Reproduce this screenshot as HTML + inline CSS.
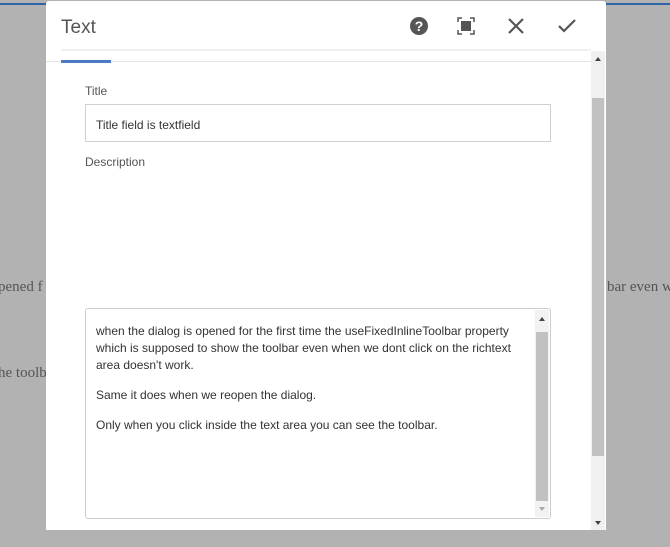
<!DOCTYPE html>
<html><head><meta charset="utf-8"><style>
*{margin:0;padding:0;box-sizing:border-box}
body{width:670px;height:547px;background:#b2b2b2;position:relative;overflow:hidden;font-family:"Liberation Sans",sans-serif}
.bg{position:absolute;font-family:"Liberation Serif",serif;font-size:15px;color:#555;white-space:nowrap}
.topline{position:absolute;left:0;top:3px;width:670px;height:2px;background:#2e64a8}
.dlg{position:absolute;left:46px;top:1px;width:560px;height:529px;background:#fff;border-radius:3px 3px 0 0}
.ttl{position:absolute;left:15px;top:16px;font-size:19px;color:#555;font-weight:300}
.strip{position:absolute;left:15px;top:48px;width:530px;height:2px;background:#f0f0f0}
.tabline{position:absolute;left:0;top:60px;width:545px;height:1px;background:#e5e5e5}
.tabsel{position:absolute;left:15px;top:59px;width:50px;height:3px;background:#4a7bc4}
.sb{position:absolute;left:545px;top:50px;width:14px;height:479px;background:#f0f0f0}
.sb .th{position:absolute;left:1px;top:47px;width:12px;height:358px;background:#c1c1c1}
.lbl{position:absolute;left:39px;font-size:12px;color:#555}
.inp{position:absolute;left:39px;top:103px;width:466px;height:38px;border:1px solid #d0d0d0;font-size:12px;color:#333;padding:13px 0 0 10px}
.ta{position:absolute;left:39px;top:307px;width:466px;height:211px;border:1px solid #ccc;border-radius:3px;font-size:12px;color:#333;padding:14px 0 0 10px;line-height:17px}
.ta p{margin-bottom:13px;width:420px}
.isb{position:absolute;right:1px;top:1px;width:14px;height:207px;background:#f2f2f2}
.isb .th{position:absolute;left:1px;top:22px;width:12px;height:169px;background:#c1c1c1}
.arr{position:absolute;width:0;height:0;border-left:3px solid transparent;border-right:3px solid transparent}
</style></head><body>
<div class="topline"></div>
<div class="bg" style="left:-2px;top:279px">pened f</div>
<div class="bg" style="left:607px;top:279px">bar even w</div>
<div class="bg" style="left:-2px;top:365px">he toolb</div>
<div class="dlg">
<div class="ttl">Text</div>
<svg style="position:absolute;left:363px;top:15px" width="20" height="20" viewBox="0 0 20 20"><circle cx="10" cy="10" r="9" fill="#555"/><text x="10" y="15" text-anchor="middle" font-size="14" font-weight="bold" fill="#fff" font-family="Liberation Sans">?</text></svg>
<svg style="position:absolute;left:411px;top:16px" width="18" height="18" viewBox="0 0 18 18" fill="none" stroke="#555" stroke-width="1.5"><path d="M1 5V1h4M13 1h4v4M17 13v4h-4M5 17H1v-4"/><rect x="4" y="4" width="10" height="10" fill="#555" stroke="none"/></svg>
<svg style="position:absolute;left:461px;top:16px" width="18" height="18" viewBox="0 0 18 18" stroke="#555" stroke-width="2.2"><path d="M2 2L16 16M16 2L2 16"/></svg>
<svg style="position:absolute;left:512px;top:18px" width="18" height="14" viewBox="0 0 18 14" fill="none" stroke="#555" stroke-width="2.2"><path d="M1 7l5 5L17 1"/></svg>
<div class="strip"></div>
<div class="tabline"></div>
<div class="tabsel"></div>
<div class="sb"><div class="arr" style="left:4px;top:6px;border-bottom:4px solid #444"></div><div class="th"></div><div class="arr" style="left:4px;top:470px;border-top:4px solid #444"></div></div>
<div class="lbl" style="top:83px">Title</div>
<div class="inp">Title field is textfield</div>
<div class="lbl" style="top:154px">Description</div>
<div class="ta">
<p>when the dialog is opened for the first time the useFixedInlineToolbar property which is supposed to show the toolbar even when we dont click on the richtext area doesn't work.</p>
<p>Same it does when we reopen the dialog.</p>
<p>Only when you click inside the text area you can see the toolbar.</p>
<div class="isb"><div class="arr" style="left:4px;top:7px;border-bottom:4px solid #444"></div><div class="th"></div><div class="arr" style="left:4px;top:197px;border-top:4px solid #aaa"></div></div>
</div>
</div>
</body></html>
